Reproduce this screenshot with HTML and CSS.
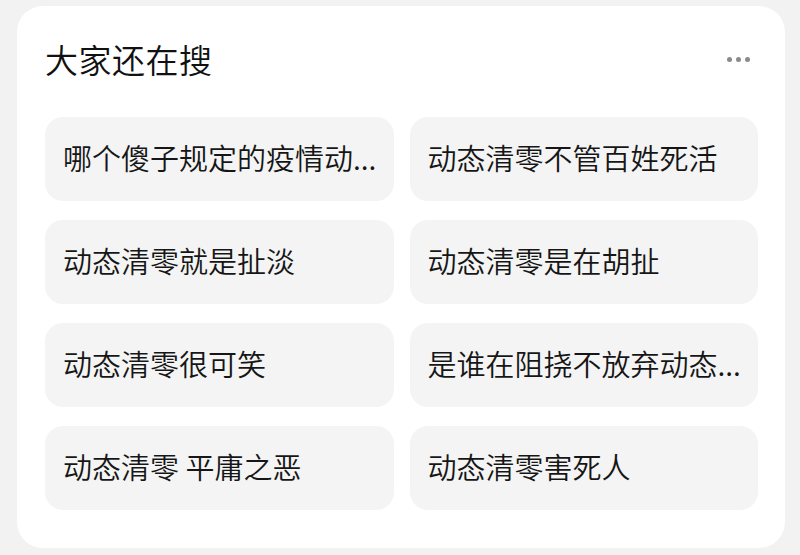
FILE: index.html
```html
<!DOCTYPE html>
<html lang="zh-CN">
<head>
    <meta charset="UTF-8">
    <meta name="viewport" content="width=device-width, initial-scale=1.0">
    <title>大家还在搜</title>
    <link rel="stylesheet" href="styles.css">
</head>
<body>
    <section class="search-card">
        <header class="search-header">
            <h2 class="search-title">大家还在搜</h2>
            <button class="more-btn" aria-label="更多">
                <span></span><span></span><span></span>
            </button>
        </header>

        <div class="search-grid">
            <a class="search-item">哪个傻子规定的疫情动...</a>
            <a class="search-item">动态清零不管百姓死活</a>
            <a class="search-item">动态清零就是扯淡</a>
            <a class="search-item">动态清零是在胡扯</a>
            <a class="search-item">动态清零很可笑</a>
            <a class="search-item">是谁在阻挠不放弃动态...</a>
            <a class="search-item">动态清零 平庸之恶</a>
            <a class="search-item">动态清零害死人</a>
        </div>
    </section>
</body>
</html>
```

FILE: styles.css
```css
* {
    margin: 0;
    padding: 0;
    box-sizing: border-box;
}

body {
    font-family: "Noto Sans CJK SC", "Noto Sans", sans-serif;
    background: #f2f2f2;
    min-height: 100vh;
}

.search-card {
    margin: 6px 15px 0 17px;
    width: 768px;
    height: 542px;
    background: #fff;
    border-radius: 26px;
    padding: 0 27px 38px 28px;
}

.search-header {
    height: 111px;
    padding-bottom: 5px;
    display: flex;
    align-items: center;
    justify-content: space-between;
}

.search-title {
    font-size: 33px;
    font-weight: 350;
    color: #111;
    letter-spacing: 0.5px;
}

.more-btn {
    display: flex;
    gap: 4px;
    margin-right: 8px;
    background: none;
    border: none;
    cursor: pointer;
}

.more-btn span {
    width: 5px;
    height: 5px;
    border-radius: 50%;
    background: #8a8a8a;
}

.search-grid {
    display: grid;
    grid-template-columns: 1fr 1fr;
    grid-auto-rows: 84px;
    column-gap: 16px;
    row-gap: 19px;
}

.search-item {
    display: flex;
    align-items: center;
    padding: 0 18px 4px;
    background: #f4f4f4;
    border-radius: 18px;
    font-size: 29px;
    font-weight: 350;
    color: #161616;
    white-space: nowrap;
    overflow: hidden;
    cursor: pointer;
}
```
